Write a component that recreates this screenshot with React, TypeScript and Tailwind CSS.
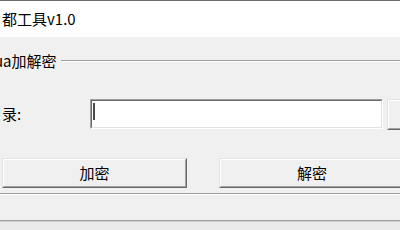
import type { ReactNode } from 'react'

// ── Win32 classic bevels ─────────────────────────────────────────────────────

function RaisedButton({ children, className }: { children?: ReactNode; className?: string }) {
  return (
    <div
      className={`shrink-0 border border-t-[#e3e3e3] border-l-[#e3e3e3] border-b-[#696969] border-r-[#696969] ${className ?? ''}`}
    >
      <div className="flex h-full items-center justify-center border border-t-white border-l-white border-b-[#a0a0a0] border-r-[#a0a0a0] bg-[#f0f0f0] text-[15px] leading-[18px]">
        {children}
      </div>
    </div>
  )
}

function SunkenInput({ className }: { className?: string }) {
  return (
    <div
      className={`shrink-0 border border-t-[#a0a0a0] border-l-[#a0a0a0] border-b-white border-r-white ${className ?? ''}`}
    >
      <div className="flex h-full items-start border border-t-[#696969] border-l-[#696969] border-b-[#e3e3e3] border-r-[#e3e3e3] bg-white pl-[1px] pt-[2px]">
        {/* caret */}
        <span className="h-[17px] w-[2px] bg-[#4a4a4a]" />
      </div>
    </div>
  )
}

function EtchedLine({ className }: { className?: string }) {
  return (
    <div className={`flex flex-col ${className ?? ''}`}>
      <div className="h-px bg-[#a0a0a0]" />
      <div className="h-px bg-white" />
    </div>
  )
}

// ── Window ────────────────────────────────────────────────────────────────────

export default function App() {
  return (
    <div className="flex h-[230px] w-[400px] flex-col overflow-hidden bg-[#f0f0f0] font-['Noto_Sans_CJK_SC',sans-serif] text-black">
      {/* frame edge */}
      <div className="h-px shrink-0 bg-[#6e6e6e]" />

      {/* title bar */}
      <div className="flex h-[36px] shrink-0 items-start bg-white pl-[2px] pt-[9px] text-[15px] leading-[18px]">
        都工具v1.0
      </div>

      {/* group box header */}
      <div className="mt-[15px] flex h-[18px] shrink-0 items-center">
        <span className="-ml-[6px] shrink-0 whitespace-nowrap text-[15px] leading-[18px]">ua加解密</span>
        <EtchedLine className="ml-[4px] flex-1" />
      </div>

      {/* directory row */}
      <div className="mt-[29px] flex h-[30px] shrink-0 items-center">
        <span className="-ml-[13px] w-[103px] shrink-0 whitespace-nowrap text-[15px] leading-[18px]">目录:</span>
        <SunkenInput className="h-[30px] w-[293px]" />
        <RaisedButton className="ml-[4px] h-[31px] w-[40px]" />
      </div>

      {/* action buttons */}
      <div className="mt-[29px] flex h-[30px] shrink-0 items-stretch pl-[2px]">
        <RaisedButton className="w-[185px]">加密</RaisedButton>
        <RaisedButton className="ml-[32px] w-[186px]">解密</RaisedButton>
      </div>

      {/* group box bottom */}
      <EtchedLine className="mt-[5px] shrink-0" />

      {/* status strip */}
      <div className="mt-[25px] h-px shrink-0 bg-[#a0a0a0]" />
      <div className="h-px shrink-0 bg-[#cfcfcf]" />
      <div className="flex-1 bg-[#ebebeb]" />
    </div>
  )
}
